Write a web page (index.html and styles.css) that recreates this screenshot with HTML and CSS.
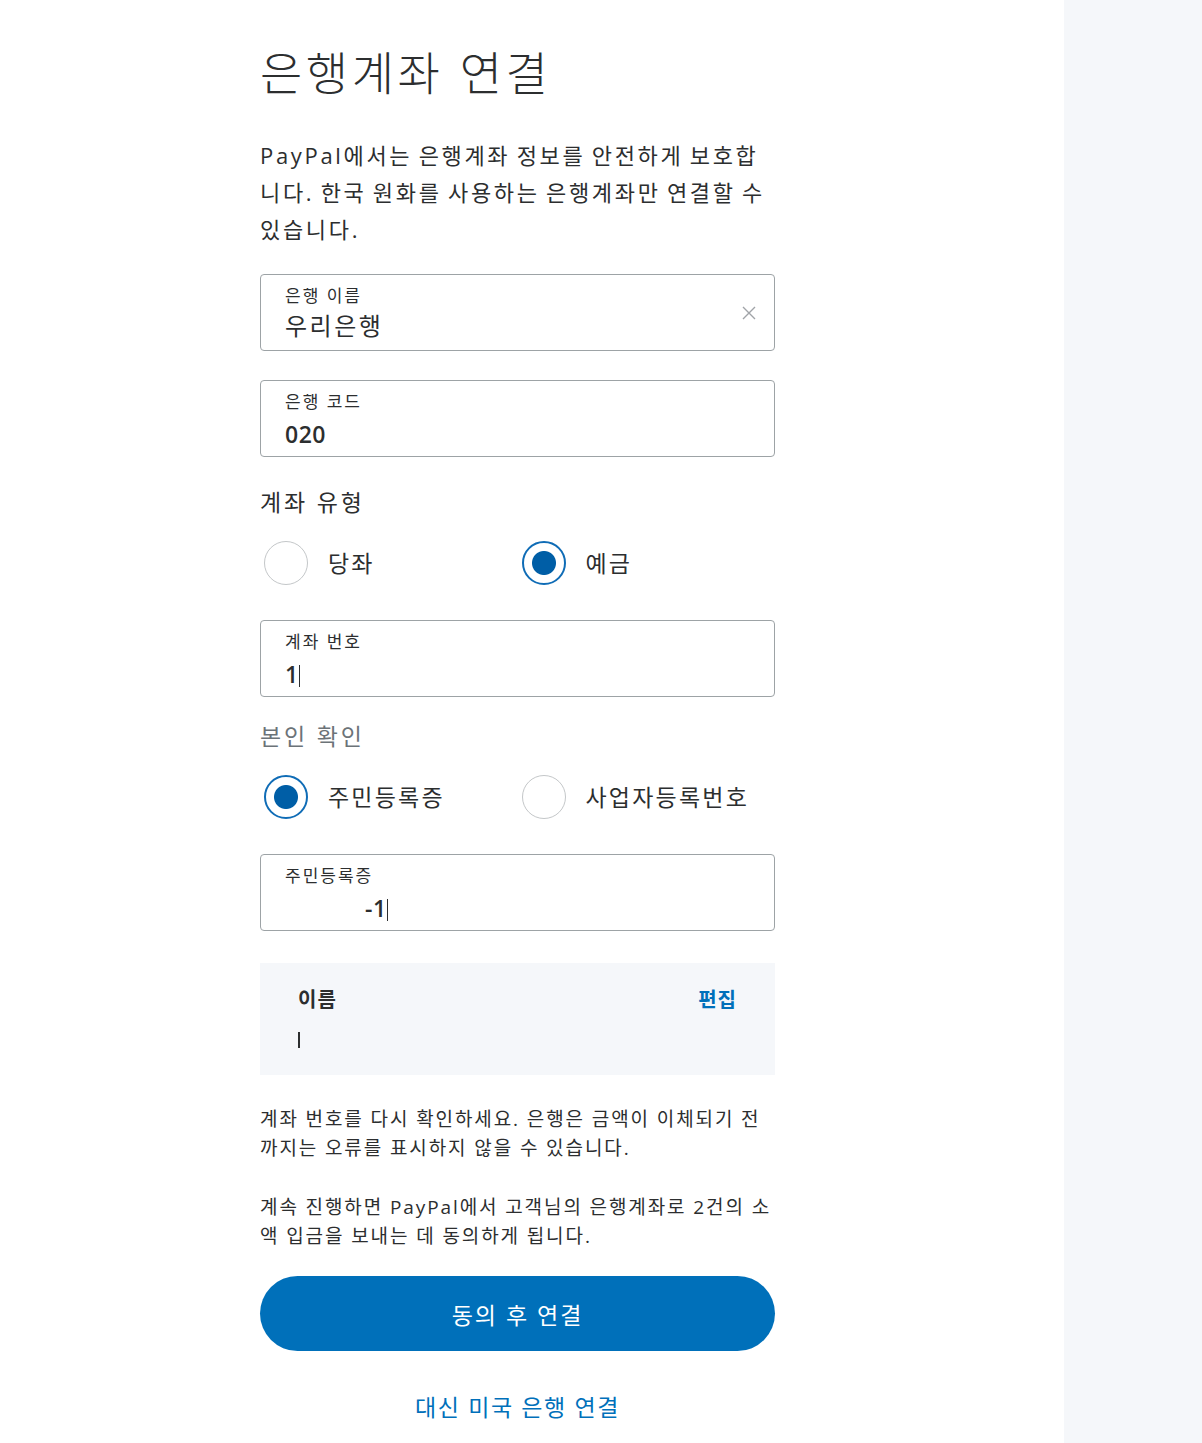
FILE: index.html
```html
<!DOCTYPE html>
<html lang="ko">
<head>
  <meta charset="UTF-8">
  <meta name="viewport" content="width=device-width, initial-scale=1.0">
  <title>은행계좌 연결</title>
  <link rel="stylesheet" href="styles.css">
</head>
<body>

<div class="page">
  <main class="main">
    <div class="content">
      <h1>은행계좌 연결</h1>

      <p class="intro">PayPal에서는 은행계좌 정보를 안전하게 보호합니다. 한국 원화를 사용하는 은행계좌만 연결할 수 있습니다.</p>

      <form id="bank-form">
        <div class="field">
          <label class="field-label">은행 이름</label>
          <div class="field-value">우리은행</div>
          <span class="clear">
            <svg width="16" height="16" viewBox="0 0 16 16"><path d="M2 2L14 14M14 2L2 14" stroke="#a0a4a8" stroke-width="1.4" fill="none"/></svg>
          </span>
        </div>

        <div class="field">
          <label class="field-label">은행 코드</label>
          <div class="field-value num">020</div>
        </div>

        <div class="group-title">계좌 유형</div>
        <div class="radios">
          <div class="radio"><span class="dot"></span>당좌</div>
          <div class="radio"><span class="dot on"></span>예금</div>
        </div>

        <div class="field">
          <label class="field-label">계좌 번호</label>
          <div class="field-value num">1<span class="caret"></span></div>
        </div>

        <div class="group-title muted">본인 확인</div>
        <div class="radios">
          <div class="radio"><span class="dot on"></span>주민등록증</div>
          <div class="radio"><span class="dot"></span>사업자등록번호</div>
        </div>

        <div class="field">
          <label class="field-label">주민등록증</label>
          <div class="field-value num masked">-1<span class="caret"></span></div>
        </div>

        <div class="name-box">
          <div class="name-head">
            <span class="name-title">이름</span>
            <a href="#" class="edit">편집</a>
          </div>
          <div class="name-value"><span class="bar"></span></div>
        </div>

        <p class="note">계좌 번호를 다시 확인하세요. 은행은 금액이 이체되기 전까지는 오류를 표시하지 않을 수 있습니다.</p>
        <p class="note">계속 진행하면 PayPal에서 고객님의 은행계좌로 2건의 소액 입금을 보내는 데 동의하게 됩니다.</p>

        <button type="submit" class="primary">동의 후 연결</button>
        <a href="#" class="alt-link">대신 미국 은행 연결</a>
      </form>
    </div>
  </main>
  <aside class="side"></aside>
</div>

</body>
</html>
```

FILE: styles.css
```css
body {
  margin: 0;
  font-family: "Open Sans", "Noto Sans CJK KR", sans-serif;
  color: #2c2e2f;
}
.page {
  display: flex;
  min-height: 1443px;
}
.main {
  width: 1064px;
  background: #fff;
}
.side {
  flex: 1;
  background: #f5f7fa;
}
.content {
  width: 515px;
  margin-left: 260px;
  padding-top: 38px;
}
h1 {
  margin: 0;
  font-family: "Noto Sans CJK KR", sans-serif;
  font-size: 46px;
  font-weight: 300;
  line-height: 64px;
  letter-spacing: 3.5px;
  color: #2c2e2f;
}
.intro {
  margin: 35px 0 26px;
  font-size: 22px;
  line-height: 37px;
  letter-spacing: 2.67px;
  word-spacing: -2px;
}
.field {
  position: relative;
  height: 77px;
  border: 1px solid #9da3a6;
  border-radius: 4px;
  padding: 9px 24px 0;
  margin-bottom: 29px;
  box-sizing: border-box;
}
.field-label {
  display: block;
  font-size: 17px;
  line-height: 24px;
  letter-spacing: 2px;
  color: #2c2e2f;
}
.field-value {
  font-size: 24px;
  line-height: 36px;
  letter-spacing: 2.5px;
}
.field-value.num {
  font-weight: 600;
  font-size: 23px;
  letter-spacing: 0.5px;
  line-height: 40px;
}
.field-value.masked {
  padding-left: 80px;
}
.caret {
  display: inline-block;
  width: 1px;
  height: 22px;
  background: #2c2e2f;
  vertical-align: -4px;
}
.clear {
  position: absolute;
  right: 17px;
  top: 30px;
  line-height: 0;
}
.group-title {
  margin-top: 7px;
  font-size: 23px;
  line-height: 32px;
  letter-spacing: 2.8px;
  color: #2c2e2f;
}
.group-title.muted {
  margin-top: -6px;
  color: #6c7378;
}
.radios {
  display: flex;
  margin: 22px 0 34px;
}
.radio {
  display: flex;
  align-items: center;
  gap: 20px;
  width: 258px;
  font-size: 23px;
  line-height: 46px;
  letter-spacing: 2.2px;
  color: #2c2e2f;
}
.dot {
  width: 44px;
  height: 44px;
  border: 1.5px solid #c4c7c9;
  border-radius: 50%;
  box-sizing: border-box;
  margin-left: 4px;
}
.dot.on {
  border: 2px solid #0f6cb6;
  background: radial-gradient(circle, #005ea6 0, #005ea6 11.5px, #fff 12.5px);
}
.name-box {
  background: #f5f7fa;
  height: 112px;
  padding: 21px 38px 0;
  box-sizing: border-box;
  margin-top: 32px;
}
.name-head {
  display: flex;
  justify-content: space-between;
  font-size: 20px;
  font-weight: 700;
  line-height: 32px;
  letter-spacing: 1px;
}
.edit {
  color: #0070ba;
  text-decoration: none;
}
.name-value {
  height: 48px;
  display: flex;
  align-items: center;
}
.bar {
  width: 2px;
  height: 16px;
  background: #2c2e2f;
}
.note {
  margin: 30px 0 0;
  font-size: 19px;
  line-height: 29px;
  letter-spacing: 1.9px;
  color: #2c2e2f;
}
.primary {
  display: block;
  width: 100%;
  height: 75px;
  margin-top: 25px;
  border: none;
  border-radius: 38px;
  background: #0070ba;
  color: #fff;
  font-family: inherit;
  font-size: 23px;
  letter-spacing: 2px;
  cursor: pointer;
}
.primary:hover {
  background: #005ea6;
}
.alt-link {
  display: block;
  margin-top: 38px;
  text-align: center;
  font-size: 23px;
  letter-spacing: 1.6px;
  color: #0070ba;
  text-decoration: none;
}
```
